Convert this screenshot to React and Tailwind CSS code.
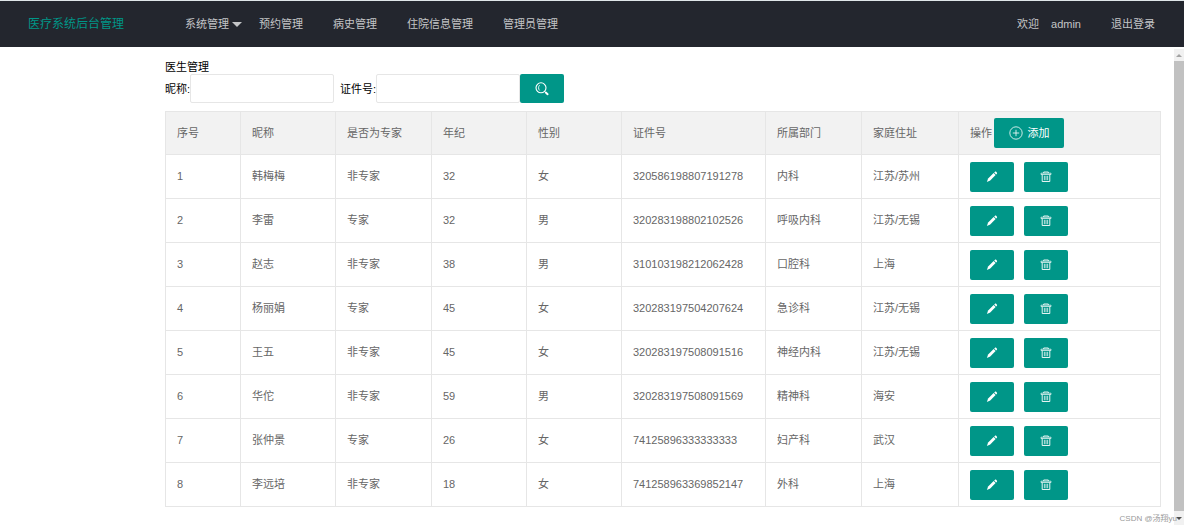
import React, { useState } from 'react';

const navItems = [
  { label: '系统管理', hasMenu: true },
  { label: '预约管理' },
  { label: '病史管理' },
  { label: '住院信息管理' },
  { label: '管理员管理' },
];

const doctors = [
  { id: 1, name: '韩梅梅', expert: false, age: 32, sex: '女', card: '320586198807191278', dept: '内科', address: '江苏/苏州' },
  { id: 2, name: '李雷', expert: true, age: 32, sex: '男', card: '320283198802102526', dept: '呼吸内科', address: '江苏/无锡' },
  { id: 3, name: '赵志', expert: false, age: 38, sex: '男', card: '310103198212062428', dept: '口腔科', address: '上海' },
  { id: 4, name: '杨丽娟', expert: true, age: 45, sex: '女', card: '320283197504207624', dept: '急诊科', address: '江苏/无锡' },
  { id: 5, name: '王五', expert: false, age: 45, sex: '女', card: '320283197508091516', dept: '神经内科', address: '江苏/无锡' },
  { id: 6, name: '华佗', expert: false, age: 59, sex: '男', card: '320283197508091569', dept: '精神科', address: '海安' },
  { id: 7, name: '张仲景', expert: true, age: 26, sex: '女', card: '74125896333333333', dept: '妇产科', address: '武汉' },
  { id: 8, name: '李远培', expert: false, age: 18, sex: '女', card: '741258963369852147', dept: '外科', address: '上海' },
];

const SearchIcon = () => (
  <svg className="h-4 w-4" viewBox="0 0 16 16" fill="none" stroke="currentColor" aria-hidden="true">
    <circle cx="7" cy="6.800" r="5" strokeWidth="1.1" />
    <path d="M5.600 4.200C4.200 5.300 4.200 8.200 5.600 9.400" strokeWidth="0.9" />
    <path d="M10.600 10.400l1.200 1.200" strokeWidth="1" />
    <path d="M11.800 11.600l1.800 1.600" strokeWidth="2" strokeLinecap="round" />
  </svg>
);

const AddIcon = () => (
  <svg className="h-[14px] w-[14px]" viewBox="0 0 14 14" fill="none" stroke="currentColor" strokeWidth="0.8" aria-hidden="true">
    <circle cx="7" cy="7" r="6.200" />
    <path d="M7 3.800v6.400M3.800 7h6.400" />
  </svg>
);

const EditIcon = () => (
  <svg className="h-3 w-3" viewBox="0 0 12 12" fill="currentColor" aria-hidden="true">
    <path d="M7.600 2.100L9.600 4.100 4.200 9.400 0.900 10.900 2.100 7.500z" />
    <path d="M8.200 1.500l.8-.7c.4-.3.900-.3 1.300.1l.5.5c.4.4.4.900.1 1.300l-.7.8z" />
  </svg>
);

const DeleteIcon = () => (
  <svg className="h-3 w-3" viewBox="0 0 12 12" fill="none" stroke="currentColor" aria-hidden="true">
    <path d="M3.700 2V1h4.600v1" strokeWidth="0.9" />
    <path d="M1 2.200h10v1.300H1z" strokeWidth="0.7" />
    <path d="M2.200 3.700v6.800h7.600V3.700" strokeWidth="0.9" />
    <path d="M4.400 4.800v4.400M6 4.800v4.400M7.600 4.800v4.400" strokeWidth="0.7" />
  </svg>
);

const ActionButton = ({ label, children }) => (
  <button
    type="button"
    aria-label={label}
    className="flex h-[30px] w-11 items-center justify-center rounded-xs bg-[#009688] text-white hover:opacity-80"
  >
    {children}
  </button>
);

const Header = () => (
  <header className="flex h-[47px] items-center border-t border-[#dfe6e9] bg-[#23262e] pr-[14px] text-[#c4c5c7]">
    <h1 className="w-[170px] shrink-0 pl-7 text-xs text-[#009688]">医疗系统后台管理</h1>
    <nav className="flex flex-1">
      {navItems.map((item) => (
        <a key={item.label} href="#" className="relative px-[15px] hover:text-white">
          {item.label}
          {item.hasMenu && (
            <span className="absolute top-1/2 right-[2px] -mt-[2px] border-x-[5px] border-t-[5px] border-x-transparent border-t-current" />
          )}
        </a>
      ))}
    </nav>
    <a href="#" className="flex gap-3 px-[15px] hover:text-white">
      <span>欢迎</span>
      <span>admin</span>
    </a>
    <a href="#" className="px-[15px] hover:text-white">退出登录</a>
  </header>
);

const SearchForm = () => {
  const [name, setName] = useState('');
  const [card, setCard] = useState('');

  return (
    <form className="flex items-center text-black" onSubmit={(e) => e.preventDefault()}>
      <label htmlFor="name" className="pt-[2px]">昵称:</label>
      <input
        id="name"
        type="text"
        value={name}
        onChange={(e) => setName(e.target.value)}
        className="mr-[6px] h-[29px] w-36 rounded-xs border border-[#e6e6e6] px-2 outline-none"
      />
      <label htmlFor="card" className="pt-[2px]">证件号:</label>
      <input
        id="card"
        type="text"
        value={card}
        onChange={(e) => setCard(e.target.value)}
        className="h-[29px] w-36 rounded-xs border border-[#e6e6e6] px-2 outline-none"
      />
      <button
        type="submit"
        aria-label="搜索"
        className="flex h-[29px] w-11 items-center justify-center rounded-xs bg-[#009688] text-white hover:opacity-80"
      >
        <SearchIcon />
      </button>
    </form>
  );
};

const cell = 'border border-[#e6e6e6] px-[11px] py-0 text-left font-normal';

const DoctorTable = () => (
  <table className="mt-2 w-full table-fixed border-collapse text-[#666]">
    <colgroup>
      <col className="w-[75px]" />
      <col className="w-[95px]" />
      <col className="w-24" />
      <col className="w-[95px]" />
      <col className="w-[95px]" />
      <col className="w-36" />
      <col className="w-24" />
      <col className="w-[97px]" />
      <col />
    </colgroup>
    <thead>
      <tr className="h-[43px] bg-[#f2f2f2]">
        <th className={cell}>序号</th>
        <th className={cell}>昵称</th>
        <th className={cell}>是否为专家</th>
        <th className={cell}>年纪</th>
        <th className={cell}>性别</th>
        <th className={cell}>证件号</th>
        <th className={cell}>所属部门</th>
        <th className={cell}>家庭住址</th>
        <th className={cell}>
          <div className="flex items-center gap-[2px]">
            <span>操作</span>
            <button
              type="button"
              className="flex h-[30px] w-[70px] items-center justify-center gap-[5px] rounded-xs bg-[#009688] text-white hover:opacity-80"
            >
              <AddIcon />
              添加
            </button>
          </div>
        </th>
      </tr>
    </thead>
    <tbody>
      {doctors.map((d) => (
        <tr key={d.id} className="h-11 hover:bg-[#f2f2f2]">
          <td className={cell}>{d.id}</td>
          <td className={cell}>{d.name}</td>
          <td className={cell}>{d.expert ? '专家' : '非专家'}</td>
          <td className={cell}>{d.age}</td>
          <td className={cell}>{d.sex}</td>
          <td className={cell}>{d.card}</td>
          <td className={cell}>{d.dept}</td>
          <td className={cell}>{d.address}</td>
          <td className={cell}>
            <div className="flex gap-[10px]">
              <ActionButton label="编辑">
                <EditIcon />
              </ActionButton>
              <ActionButton label="删除">
                <DeleteIcon />
              </ActionButton>
            </div>
          </td>
        </tr>
      ))}
    </tbody>
  </table>
);

const ScrollBar = () => (
  <div className="flex w-[10px] shrink-0 flex-col bg-[#f1f1f1]" aria-hidden="true">
    <div className="flex h-3 items-center justify-center">
      <span className="border-x-[3px] border-b-[3px] border-x-transparent border-b-[#a3a3a3]" />
    </div>
    <div className="flex-1 bg-[#c1c1c1]" />
    <div className="flex h-[14px] items-center justify-center">
      <span className="border-x-[3px] border-t-[3px] border-x-transparent border-t-[#505050]" />
    </div>
  </div>
);

export default function App() {
  return (
    <div className="relative flex min-h-screen flex-col bg-white pb-[3px] font-['Liberation_Sans','Noto_Sans_CJK_SC',sans-serif] text-[11px] leading-[15px]">
      <Header />
      <div className="flex flex-1 pt-[2px]">
        <main className="min-w-0 flex-1 pt-[11px] pr-[13px] pl-[165px]">
          <h2 className="leading-[14px] text-black">医生管理</h2>
          <SearchForm />
          <DoctorTable />
        </main>
        <ScrollBar />
      </div>
      <span className="absolute right-[7px] bottom-[2px] text-[8px] text-[#999]">CSDN @汤翔yu</span>
    </div>
  );
}
